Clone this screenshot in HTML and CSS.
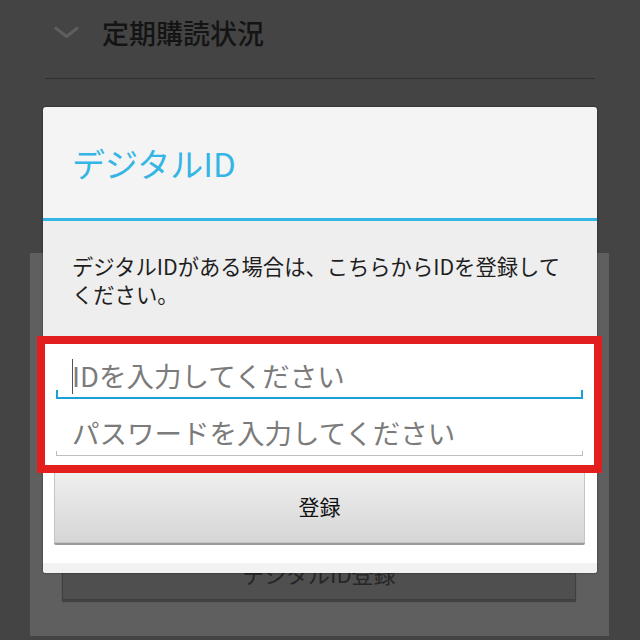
FILE: index.html
```html
<!DOCTYPE html>
<html lang="ja">
<head>
    <meta charset="UTF-8">
    <meta name="viewport" content="width=device-width, initial-scale=1.0">
    <title>デジタルID</title>
    <link rel="stylesheet" href="styles.css">
</head>
<body>
    <div class="screen">
        <div class="section-head">
            <svg class="chevron" width="27" height="12" viewBox="0 0 27 12">
                <path d="M2 1.5 L13.5 10.5 L25 1.5" fill="none" stroke="#5e5e5e" stroke-width="3"/>
            </svg>
            <div class="section-title">定期購読状況</div>
        </div>
        <div class="divider"></div>

        <div class="panel">
            <div class="panel-btn">デジタルID登録</div>
        </div>
    </div>

    <!-- ダイアログ -->
    <div class="dialog">
        <div class="dialog-head">デジタルID</div>
        <div class="dialog-msg">デジタルIDがある場合は、こちらからIDを登録して<br>ください。</div>
        <div class="dialog-form">
            <div class="field focused">
                <span class="caret"></span>
                <input type="text" placeholder="IDを入力してください">
            </div>
            <div class="field">
                <input type="password" placeholder="パスワードを入力してください">
            </div>
            <button class="submit-btn">登録</button>
        </div>
        <div class="dialog-foot"></div>
    </div>

    <!-- 注目枠 -->
    <div class="highlight"></div>
</body>
</html>
```

FILE: styles.css
```css
* {
    box-sizing: border-box;
    margin: 0;
    padding: 0;
}

body {
    font-family: "Noto Sans CJK JP", "Noto Sans", sans-serif;
    background-color: #444444;
    width: 640px;
    height: 640px;
    overflow: hidden;
    position: relative;
}

.screen {
    height: 640px;
}

.section-head {
    display: flex;
    align-items: center;
    gap: 22px;
    height: 64px;
    padding-left: 53px;
}

.section-title {
    font-size: 27px;
    font-weight: 500;
    color: #141414;
    line-height: 1;
}

.divider {
    margin: 14px 45px 0 45px;
    border-top: 1px solid #2f2f2f;
}

.panel {
    margin: 174px 31px 0 30px;
    height: 383px;
    background-color: #5f5f5f;
    padding-top: 292px;
}

.panel-btn {
    margin: 0 33px 0 32px;
    height: 55px;
    background-color: #4f4f4f;
    border: 1px solid #3f3f3f;
    box-shadow: 0 2px 1px rgba(0,0,0,0.3);
    display: flex;
    align-items: center;
    justify-content: center;
    font-size: 22px;
    color: #262626;
}

.dialog {
    position: absolute;
    left: 43px;
    top: 107px;
    width: 554px;
    height: 466px;
    background: #f4f4f4;
    border-radius: 3px;
    overflow: hidden;
    box-shadow: 0 0 2px rgba(0,0,0,0.6);
    display: flex;
    flex-direction: column;
}

.dialog-head {
    height: 114px;
    display: flex;
    align-items: center;
    padding-left: 29px;
    font-size: 33px;
    color: #33b5e5;
    border-bottom: 3px solid #33b5e5;
    flex-shrink: 0;
}

.dialog-msg {
    background: #eeeeee;
    padding: 31px 8px 30px 29px;
    font-size: 21.3px;
    line-height: 28px;
    color: #1e1e1e;
    white-space: nowrap;
}

.dialog-form {
    background: #ffffff;
    padding: 4px 12px 20px 11px;
}

.field {
    position: relative;
    margin: 0 2px 0 2px;
    height: 57px;
    border-bottom: 1px solid #bdbdbd;
}

.field::before,
.field::after {
    content: "";
    position: absolute;
    bottom: 0;
    width: 1px;
    height: 4px;
    background: #bdbdbd;
}

.field::before { left: 0; }
.field::after { right: 0; }

.field.focused {
    border-bottom: 2px solid #1a9fd6;
}

.field.focused::before,
.field.focused::after {
    width: 2px;
    height: 7px;
    background: #1a9fd6;
}

.field input {
    width: 100%;
    height: 100%;
    border: none;
    outline: none;
    background: transparent;
    font-family: inherit;
    font-size: 27.5px;
    color: #333;
    padding: 10px 0 0 16px;
}

.field input::placeholder {
    color: #7b7b7b;
}

.caret {
    position: absolute;
    left: 16px;
    top: 17px;
    width: 1px;
    height: 35px;
    background: #555;
}

.submit-btn {
    display: block;
    width: 100%;
    height: 75px;
    margin-top: 12px;
    border: 1px solid #c4c4c4;
    border-radius: 2px;
    background: linear-gradient(#f0f0f0, #d6d6d6);
    box-shadow: 0 2px 0 #9a9a9a;
    font-family: inherit;
    font-size: 21px;
    color: #111;
    cursor: pointer;
}

.dialog-foot {
    flex: 1;
    background: #f2f2f2;
}

.highlight {
    position: absolute;
    left: 37px;
    top: 336px;
    width: 565px;
    height: 137px;
    border: 8px solid #e31e1e;
}
```
